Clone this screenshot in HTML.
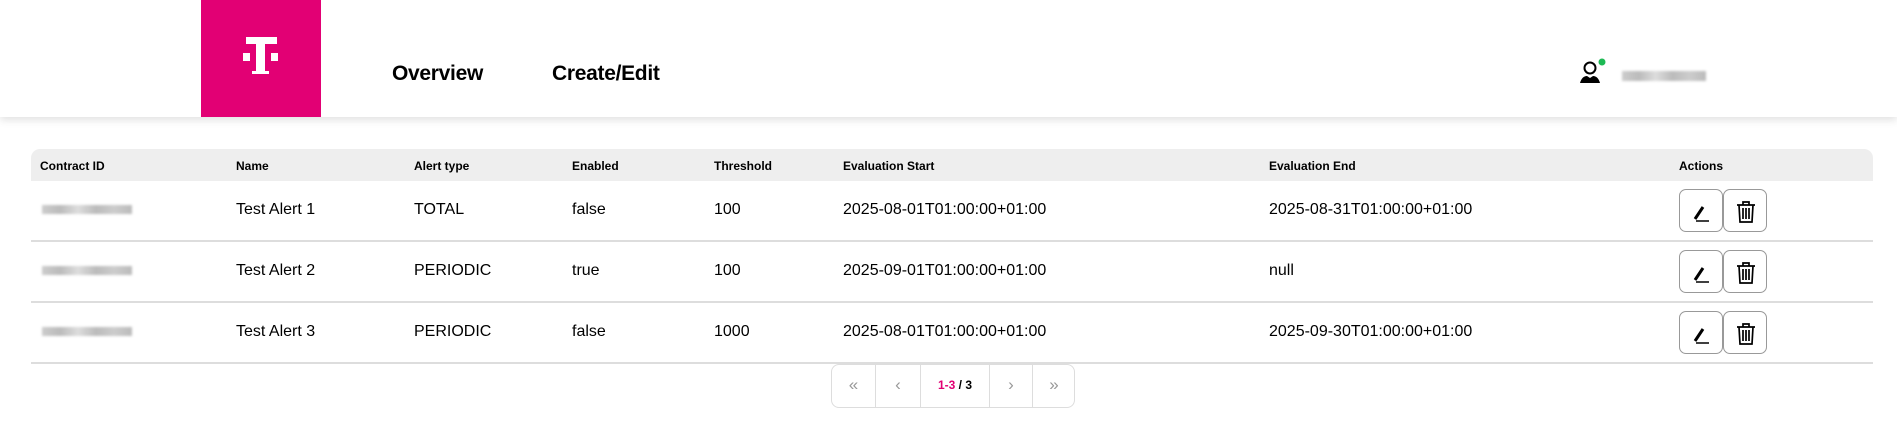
<!DOCTYPE html>
<html><head><meta charset="utf-8"><style>
*{box-sizing:border-box;margin:0;padding:0}
body{width:1897px;height:439px;background:#fff;font-family:"Liberation Sans",Arial,sans-serif;position:relative;overflow:hidden;color:#000}
.hdr{position:absolute;left:0;top:0;width:1897px;height:117px;background:#fff;box-shadow:0 3px 8px rgba(0,0,0,.12)}
.logo{position:absolute;left:201px;top:0;width:120px;height:117px;background:#e20074}
.nav{position:absolute;top:62px;font-weight:bold;font-size:21px;letter-spacing:-0.3px}
.blur{position:absolute;background:linear-gradient(90deg,#ccc,#bbb,#ddd,#bbb,#ccc,#bbb);filter:blur(1.2px)}
.th{position:absolute;left:31px;top:149px;width:1842px;height:32px;background:#eee;border-radius:9px 9px 0 0}
.h{position:absolute;top:159px;font-size:12px;font-weight:bold}
.row{position:absolute;left:31px;width:1842px;border-bottom:2px solid #ddd}
.c{position:absolute;font-size:16px}
.btn{position:absolute;width:44px;height:43px;border:1px solid #999;border-radius:7px;background:#fff}
.btn svg{position:absolute;left:10px;top:10px}
.pg{position:absolute;left:831px;top:364px;width:244px;height:44px;border:1px solid #ddd;border-radius:8px}
.pg div{position:absolute;top:0;height:42px;border-right:1px solid #ddd;color:#999;font-size:17px;text-align:center;line-height:40px}
</style></head><body>
<div class="hdr">
<div class="logo"><svg width="120" height="117" viewBox="0 0 120 117"><rect x="45" y="37" width="31" height="7" fill="#fff"/><rect x="55" y="37" width="9" height="37" fill="#fff"/><rect x="51" y="71" width="17" height="3" fill="#fff"/><rect x="42" y="53" width="7" height="8" fill="#fff"/><rect x="70" y="53" width="7" height="8" fill="#fff"/></svg></div>
<div class="nav" style="left:392px">Overview</div>
<div class="nav" style="left:552px">Create/Edit</div>
<svg style="position:absolute;left:1579px;top:58px" width="30" height="28" viewBox="0 0 30 28"><circle cx="11" cy="10" r="5.5" fill="none" stroke="#000" stroke-width="2"/><path d="M1 25 Q3 18 8 18 L11 20 L14 18 Q19 18 21 25 Z" fill="#000"/><circle cx="23" cy="4" r="3.5" fill="#1db954"/></svg>
<div class="blur" style="left:1622px;top:71px;width:84px;height:10px"></div>
</div>
<div class="th"></div>
<div class="h" style="left:40px">Contract ID</div><div class="h" style="left:236px">Name</div><div class="h" style="left:414px">Alert type</div><div class="h" style="left:572px">Enabled</div><div class="h" style="left:714px">Threshold</div><div class="h" style="left:843px">Evaluation Start</div><div class="h" style="left:1269px">Evaluation End</div><div class="h" style="left:1679px">Actions</div>

<div class="row" style="top:180px;height:62px"></div>
<div class="row" style="top:242px;height:61px"></div>
<div class="row" style="top:303px;height:61px"></div>

<div class="blur" style="left:42px;top:205px;width:90px;height:9px"></div>
<div class="c" style="left:236px;top:201px">Test Alert 1</div><div class="c" style="left:414px;top:201px">TOTAL</div><div class="c" style="left:572px;top:201px">false</div><div class="c" style="left:714px;top:201px">100</div><div class="c" style="left:843px;top:201px">2025-08-01T01:00:00+01:00</div><div class="c" style="left:1269px;top:201px">2025-08-31T01:00:00+01:00</div>

<div class="blur" style="left:42px;top:266px;width:90px;height:9px"></div>
<div class="c" style="left:236px;top:262px">Test Alert 2</div><div class="c" style="left:414px;top:262px">PERIODIC</div><div class="c" style="left:572px;top:262px">true</div><div class="c" style="left:714px;top:262px">100</div><div class="c" style="left:843px;top:262px">2025-09-01T01:00:00+01:00</div><div class="c" style="left:1269px;top:262px">null</div>

<div class="blur" style="left:42px;top:327px;width:90px;height:9px"></div>
<div class="c" style="left:236px;top:323px">Test Alert 3</div><div class="c" style="left:414px;top:323px">PERIODIC</div><div class="c" style="left:572px;top:323px">false</div><div class="c" style="left:714px;top:323px">1000</div><div class="c" style="left:843px;top:323px">2025-08-01T01:00:00+01:00</div><div class="c" style="left:1269px;top:323px">2025-09-30T01:00:00+01:00</div>

<div class="btn" style="left:1679px;top:189px"><svg width="24" height="24" viewBox="0 0 24 24"><path d="M5 19 L13 7" stroke="#000" stroke-width="3"/><path d="M6 21 H19" stroke="#000" stroke-width="1.5"/></svg></div>
<div class="btn" style="left:1723px;top:189px"><svg width="24" height="24" viewBox="0 0 24 24"><path d="M3 5 H21 M9 5 V2 H15 V5 M5 5 L6 22 H18 L19 5 M9 8 V19 M12 8 V19 M15 8 V19" stroke="#000" stroke-width="1.7" fill="none"/></svg></div>
<div class="btn" style="left:1679px;top:250px"><svg width="24" height="24" viewBox="0 0 24 24"><path d="M5 19 L13 7" stroke="#000" stroke-width="3"/><path d="M6 21 H19" stroke="#000" stroke-width="1.5"/></svg></div>
<div class="btn" style="left:1723px;top:250px"><svg width="24" height="24" viewBox="0 0 24 24"><path d="M3 5 H21 M9 5 V2 H15 V5 M5 5 L6 22 H18 L19 5 M9 8 V19 M12 8 V19 M15 8 V19" stroke="#000" stroke-width="1.7" fill="none"/></svg></div>
<div class="btn" style="left:1679px;top:311px"><svg width="24" height="24" viewBox="0 0 24 24"><path d="M5 19 L13 7" stroke="#000" stroke-width="3"/><path d="M6 21 H19" stroke="#000" stroke-width="1.5"/></svg></div>
<div class="btn" style="left:1723px;top:311px"><svg width="24" height="24" viewBox="0 0 24 24"><path d="M3 5 H21 M9 5 V2 H15 V5 M5 5 L6 22 H18 L19 5 M9 8 V19 M12 8 V19 M15 8 V19" stroke="#000" stroke-width="1.7" fill="none"/></svg></div>

<div class="pg">
<div style="left:0;width:44px">«</div>
<div style="left:44px;width:45px">‹</div>
<div style="left:89px;width:69px;font-size:12px;font-weight:bold;color:#000"><span style="color:#e20074">1-3</span> / 3</div>
<div style="left:158px;width:43px">›</div>
<div style="left:201px;width:42px;border-right:none">»</div>
</div>
</body></html>
